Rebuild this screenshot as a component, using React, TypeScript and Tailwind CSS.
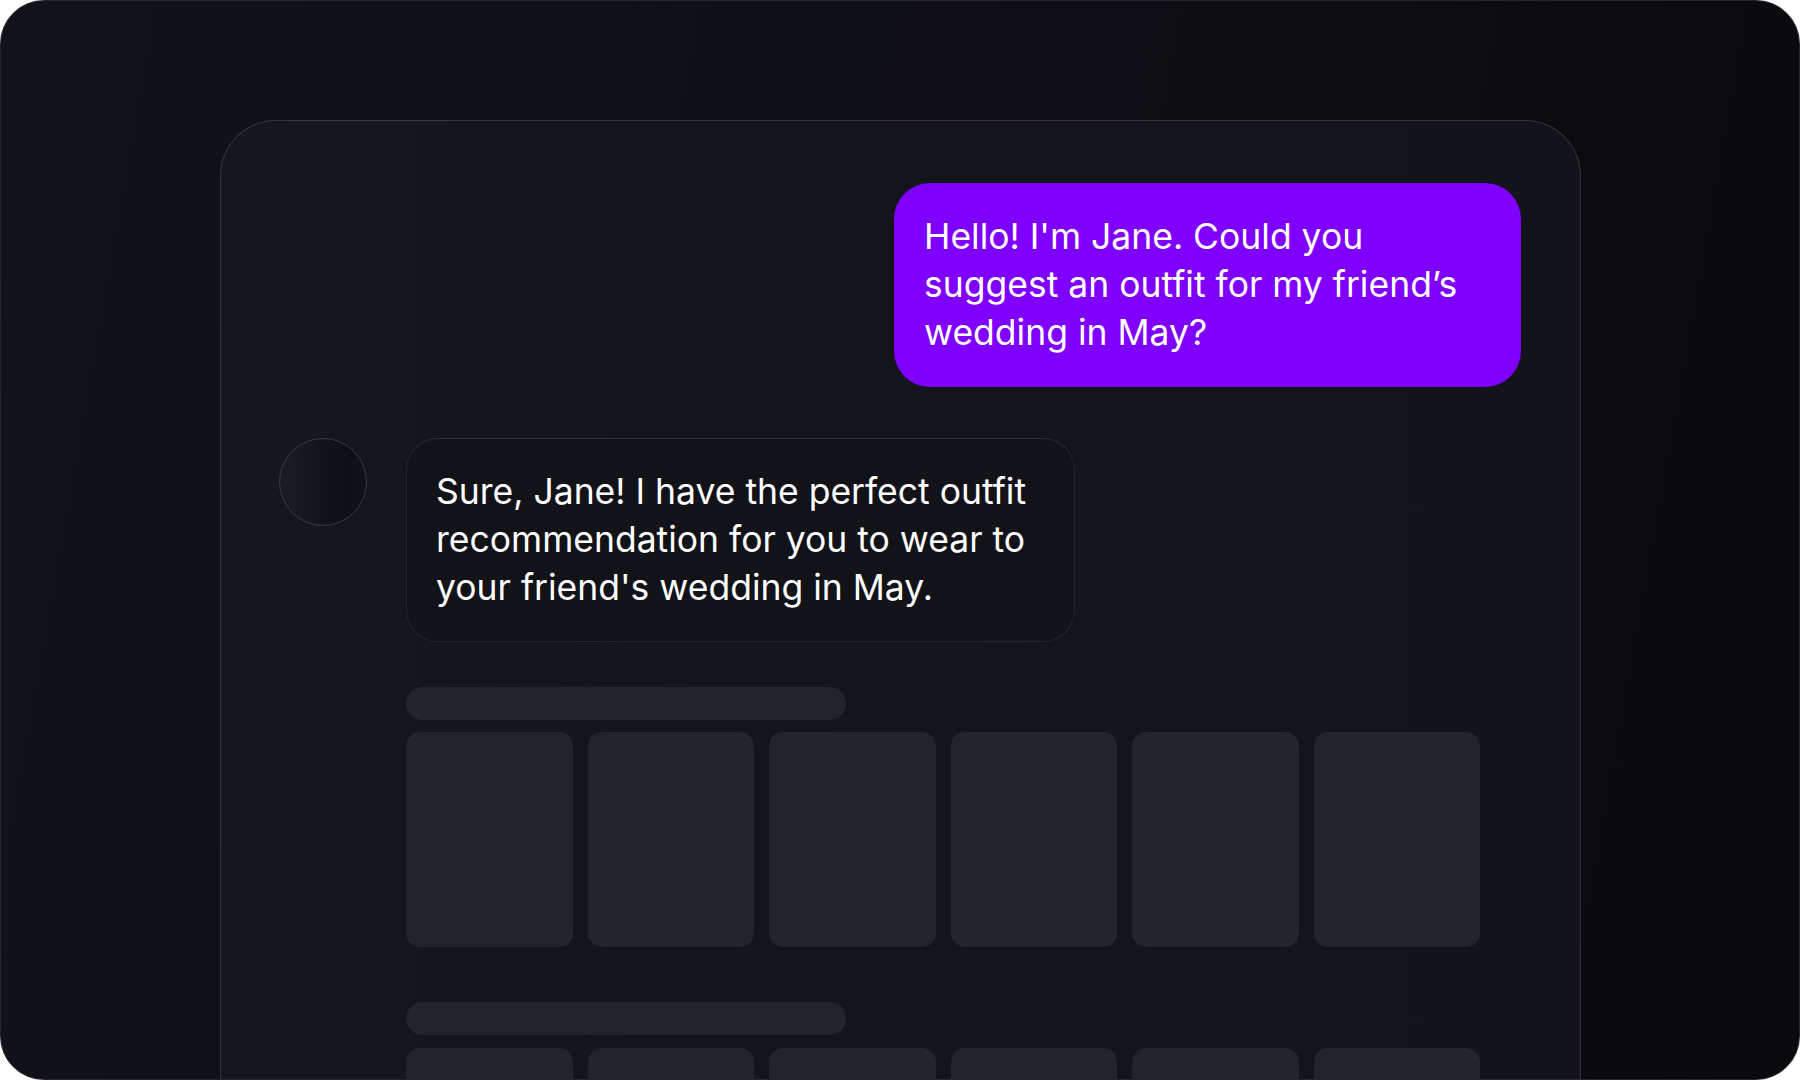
import React from "react";

export default function App() {
  const cards = [0, 1, 2, 3, 4, 5];
  return (
    <div className="w-[1800px] h-[1080px] bg-white font-['Inter',sans-serif]">
      <div className="w-full h-full rounded-[44px] border border-[#25262c] overflow-hidden bg-[linear-gradient(100deg,#11121a_0%,#0f1016_45%,#0b0b0f_85%,#0a0a0d_100%)] pt-[119px] pl-[219px] pr-[218px]">
        <div className="h-[1100px] rounded-t-[56px] border border-b-0 border-[#33343d] bg-[linear-gradient(90deg,#16171e_0%,#14151c_30%,#13141b_100%)] pt-[62px] pl-[58px] pr-[59px] flex flex-col">
          <div className="self-end w-[627px] rounded-[36px] bg-[#8000ff] pl-[30px] pr-8 pt-[30px] pb-[30px] text-white text-[35.5px] leading-[48px]">
            Hello! I'm Jane. Could you suggest an outfit for my friend’s wedding in May?
          </div>
          <div className="mt-[51px] flex items-start gap-[39px]">
            <div className="w-[88px] h-[88px] shrink-0 rounded-full border border-[#373842] bg-[linear-gradient(90deg,#1b1c24_0%,#15161d_35%,#0f1015_75%,#111217_100%)]" />
            <div className="w-[669px] rounded-[32px] border border-[#24252d] border-t-[#2c2d36] bg-[#121319] pl-[29px] pr-[30px] pt-[29px] pb-[29px] text-white text-[35.5px] leading-[48px]">
              Sure, Jane! I have the perfect outfit recommendation for you to wear to your friend's wedding in May.
            </div>
          </div>
          <div className="ml-[127px] mt-[45px] flex flex-col">
            <div className="h-[33px] w-[440px] rounded-full bg-[#23242a]" />
            <div className="mt-[12px] grid grid-cols-6 gap-[15px] w-[1074px]">
              {cards.map((c) => (
                <div key={c} className="h-[215px] rounded-[14px] bg-[#23242a]" />
              ))}
            </div>
            <div className="mt-[55px] h-[33px] w-[440px] rounded-full bg-[#23242a]" />
            <div className="mt-[13px] grid grid-cols-6 gap-[15px] w-[1074px]">
              {cards.map((c) => (
                <div key={c} className="h-[215px] rounded-[14px] bg-[#23242a]" />
              ))}
            </div>
          </div>
        </div>
      </div>
    </div>
  );
}
